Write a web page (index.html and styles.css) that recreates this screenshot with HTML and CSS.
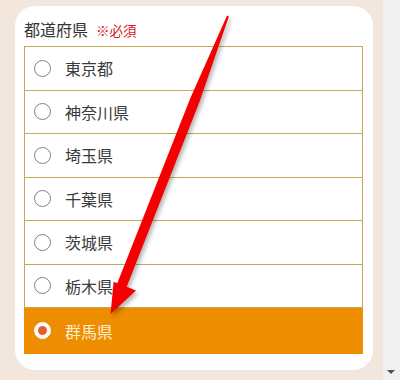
FILE: index.html
```html
<!DOCTYPE html>
<html lang="ja">
<head>
<meta charset="utf-8">
<link rel="stylesheet" href="styles.css">
</head>
<body>
<div class="page">
  <main class="main">
    <section class="card">
      <div class="label">都道府県<span class="req">※必須</span></div>
      <ul class="list">
        <li class="row"><span class="radio"></span><span class="name">東京都</span></li>
        <li class="row"><span class="radio"></span><span class="name">神奈川県</span></li>
        <li class="row"><span class="radio"></span><span class="name">埼玉県</span></li>
        <li class="row"><span class="radio"></span><span class="name">千葉県</span></li>
        <li class="row"><span class="radio"></span><span class="name">茨城県</span></li>
        <li class="row"><span class="radio"></span><span class="name">栃木県</span></li>
        <li class="row selected"><span class="radio"></span><span class="name">群馬県</span></li>
      </ul>
    </section>
  </main>
  <div class="scrollbar"><span class="down"></span></div>
</div>
<svg class="arrow" width="400" height="380" viewBox="0 0 400 380">
  <polygon fill="#f50000" points="227.1,15.6 190.3,98.2 117.3,283.2 113.6,281.7 110.6,314 136,290.5 126.7,286.8 199.5,101.8 228.9,16.4"/>
</svg>
</body>
</html>
```

FILE: styles.css
```css
html, body {
  margin: 0;
  padding: 0;
}
body {
  width: 400px;
  height: 380px;
  overflow: hidden;
  background: #f2e6dd;
  font-family: "Noto Sans CJK JP", "Noto Sans", sans-serif;
  color: #333;
  position: relative;
}
.page {
  display: flex;
  height: 380px;
}
.main {
  flex: 1;
  padding: 6px 10px 10px 15px;
}
.card {
  background: #fff;
  border-radius: 20px;
  height: 364px;
  box-sizing: border-box;
  padding: 12px 10px 0 9px;
}
.label {
  font-size: 16px;
  line-height: 22px;
  height: 22px;
  margin-bottom: 6px;
  color: #333;
}
.req {
  font-size: 13.5px;
  color: #d9191c;
  margin-left: 8px;
}
.list {
  list-style: none;
  margin: 0;
  padding: 0;
  border: 1px solid #c6a85a;
  border-bottom: none;
}
.row {
  display: flex;
  align-items: center;
  height: 42.5px;
  border-bottom: 1px solid #c6a85a;
  padding-left: 9px;
  font-size: 16px;
}
.radio {
  width: 15px;
  height: 15px;
  border: 1px solid #808080;
  border-radius: 50%;
  background: #fff;
  box-sizing: content-box;
  position: relative;
}
.name {
  margin-left: 14px;
  line-height: 20px;
  color: #3a3a3a;
}
.row.selected {
  background: #ef8d00;
  border-bottom-color: #ef8d00;
  height: 45px;
  margin: 0 -1px;
  padding-left: 10px;
}
.row.selected .name {
  color: #fdeed2;
}
.row.selected .radio {
  border-color: #fff;
}
.row.selected .radio::after {
  content: "";
  position: absolute;
  left: 3px;
  top: 3px;
  width: 9px;
  height: 9px;
  border-radius: 50%;
  background: #e2602e;
}
.scrollbar {
  width: 17px;
  background: #f0f0f0;
  position: relative;
}
.down {
  position: absolute;
  left: 4px;
  bottom: 6px;
  width: 0;
  height: 0;
  border-left: 4px solid transparent;
  border-right: 4px solid transparent;
  border-top: 4px solid #505050;
}
.arrow {
  position: absolute;
  left: 0;
  top: 0;
  pointer-events: none;
  filter: drop-shadow(2px 3px 2px rgba(0,0,0,0.3));
}
```
